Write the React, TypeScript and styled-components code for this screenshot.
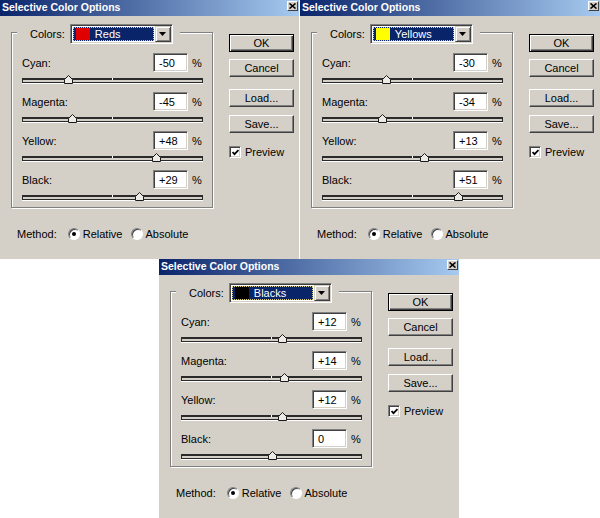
import React from "react";
import styled, { createGlobalStyle } from "styled-components";

const FACE = "#d4d0c8";
const SHADOW = "#808080";
const DARK = "#404040";

type Preset = { name: string; swatch: string; values: number[] };

const channels = ["Cyan", "Magenta", "Yellow", "Black"];

const reds: Preset = { name: "Reds", swatch: "#e00000", values: [-50, -45, 48, 29] };
const yellows: Preset = { name: "Yellows", swatch: "#ffff00", values: [-30, -34, 13, 51] };
const blacks: Preset = { name: "Blacks", swatch: "#000000", values: [12, 14, 12, 0] };

const fmt = (v: number) => (v > 0 ? `+${v}` : `${v}`);

const SelectiveColor = ({ preset, divider }: { preset: Preset; divider?: boolean }) => {
  return (
    <Window $divider={divider}>
      <TitleBar>
        <Title>Selective Color Options</Title>
        <CloseBox>
          <svg width="7" height="6" viewBox="0 0 7 6">
            <path d="M0.5 0.5 L6.5 5.5 M6.5 0.5 L0.5 5.5" stroke="#000" strokeWidth="1.6" />
          </svg>
        </CloseBox>
      </TitleBar>

      <Body>
        <LeftColumn>
          <GroupBox>
            <Legend>
              <span>Colors:</span>
              <Dropdown>
                <Selection>
                  <Swatch $colour={preset.swatch} />
                  <span>{preset.name}</span>
                </Selection>
                <ArrowButton>
                  <svg width="7" height="4" viewBox="0 0 7 4">
                    <path d="M0 0 H7 L3.5 4 Z" fill="#000" />
                  </svg>
                </ArrowButton>
              </Dropdown>
            </Legend>

            <Rows>
              {channels.map((ch, i) => (
                <Row key={ch}>
                  <RowHeader>
                    <Label>{ch}:</Label>
                    <Field>{fmt(preset.values[i])}</Field>
                    <Percent>%</Percent>
                  </RowHeader>
                  <SliderArea>
                    <Track>
                      <Thumb style={{ left: 90.5 + preset.values[i] * 0.9 - 5 }}>
                        <svg width="9" height="9" viewBox="0 0 9 9">
                          <polygon
                            points="4.5,0.5 8.5,4.5 8.5,8.5 0.5,8.5 0.5,4.5"
                            fill="#ecebe6"
                            stroke="#1a1a1a"
                          />
                        </svg>
                      </Thumb>
                    </Track>
                  </SliderArea>
                </Row>
              ))}
            </Rows>
          </GroupBox>

          <MethodRow>
            <MethodLabel>Method:</MethodLabel>
            <RadioOption>
              <Radio $checked />
              Relative
            </RadioOption>
            <RadioOption>
              <Radio />
              Absolute
            </RadioOption>
          </MethodRow>
        </LeftColumn>

        <RightColumn>
          <ButtonGroup $gap={7}>
            <Button $default>OK</Button>
            <Button>Cancel</Button>
          </ButtonGroup>
          <ButtonGroup $gap={8} $top={12}>
            <Button>Load...</Button>
            <Button>Save...</Button>
          </ButtonGroup>
          <CheckRow>
            <CheckBox>
              <svg width="7" height="7" viewBox="0 0 7 7">
                <polyline points="0.5,3 2.5,5.2 6.5,1" fill="none" stroke="#000" strokeWidth="1.8" />
              </svg>
            </CheckBox>
            Preview
          </CheckRow>
        </RightColumn>
      </Body>
    </Window>
  );
};

const App = () => {
  return (
    <>
      <GlobalStyle />
      <Page>
        <TopRow>
          <SelectiveColor preset={reds} divider />
          <SelectiveColor preset={yellows} />
        </TopRow>
        <BottomRow>
          <SelectiveColor preset={blacks} />
        </BottomRow>
      </Page>
    </>
  );
};

export default App;

const GlobalStyle = createGlobalStyle`
  html, body {
    margin: 0;
    padding: 0;
    background: #fff;
  }
  body {
    font-family: "Liberation Sans", Arial, sans-serif;
    font-size: 11px;
    color: #000;
  }
`;

const Page = styled.div`
  width: 600px;
  height: 518px;
  overflow: hidden;
  display: flex;
  flex-direction: column;
`;

const TopRow = styled.div`
  display: flex;
  height: 259px;
`;

const BottomRow = styled.div`
  display: flex;
  height: 259px;
  padding-left: 159px;
`;

const Window = styled.div<{ $divider?: boolean }>`
  box-sizing: border-box;
  width: 300px;
  height: 259px;
  background: ${FACE};
  display: flex;
  flex-direction: column;
  overflow: hidden;
  border-right: ${(p) => (p.$divider ? "1px solid #fff" : "none")};
`;

const TitleBar = styled.div`
  height: 16px;
  display: flex;
  justify-content: space-between;
  align-items: flex-start;
  padding: 0 1px 0 2px;
  background: linear-gradient(to right, #0a246a, #a6caf0);
`;

const Title = styled.div`
  color: #fff;
  font-weight: 700;
  font-size: 10.5px;
  line-height: 14px;
`;

const CloseBox = styled.div`
  box-sizing: border-box;
  width: 11px;
  height: 10px;
  margin-top: 1px;
  background: ${FACE};
  border: 1px solid;
  border-color: #fff ${DARK} ${DARK} #fff;
  display: flex;
  align-items: center;
  justify-content: center;
`;

const Body = styled.div`
  display: flex;
  gap: 16px;
  padding-left: 11px;
`;

const LeftColumn = styled.div`
  display: flex;
  flex-direction: column;
  margin-top: 16px;
`;

const GroupBox = styled.div`
  box-sizing: border-box;
  width: 202px;
  border: 1px solid ${SHADOW};
  box-shadow: 1px 1px 0 #fff, inset 1px 1px 0 #fff;
  display: flex;
  flex-direction: column;
  padding-bottom: 4px;
`;

const Legend = styled.div`
  align-self: flex-start;
  display: flex;
  align-items: center;
  gap: 5px;
  height: 20px;
  margin: -9px 0 0 5px;
  padding: 0 7px 0 13px;
  background: ${FACE};
`;

const Dropdown = styled.div`
  box-sizing: border-box;
  width: 103px;
  height: 20px;
  padding: 1px;
  display: flex;
  background: #fff;
  border: 1px solid;
  border-color: ${SHADOW} #fff #fff ${SHADOW};
  box-shadow: inset 1px 1px 0 ${DARK}, inset -1px -1px 0 ${FACE};
`;

const Selection = styled.div`
  flex: 1;
  margin: 1px;
  display: flex;
  align-items: center;
  gap: 5px;
  padding-left: 3px;
  background: #0a246a;
  color: #fff;
  outline: 1px dotted #d8cc80;
  outline-offset: -1px;
`;

const Swatch = styled.span<{ $colour: string }>`
  width: 14px;
  height: 12px;
  background: ${(p) => p.$colour};
`;

const ArrowButton = styled.div`
  box-sizing: border-box;
  width: 16px;
  height: 16px;
  display: flex;
  align-items: center;
  justify-content: center;
  background: ${FACE};
  border: 1px solid;
  border-color: ${FACE} ${DARK} ${DARK} ${FACE};
  box-shadow: inset 1px 1px 0 #fff, inset -1px -1px 0 ${SHADOW};
`;

const Rows = styled.div`
  display: flex;
  flex-direction: column;
  gap: 6px;
  margin-top: 9px;
  padding: 0 9px 0 10px;
`;

const Row = styled.div`
  display: flex;
  flex-direction: column;
`;

const RowHeader = styled.div`
  display: flex;
  align-items: center;
  height: 19px;
`;

const Label = styled.span`
  flex: 1;
`;

const Field = styled.div`
  box-sizing: border-box;
  width: 35px;
  height: 19px;
  padding-left: 5px;
  display: flex;
  align-items: center;
  background: #fff;
  border: 1px solid;
  border-color: ${SHADOW} #fff #fff ${SHADOW};
  box-shadow: inset 1px 1px 0 ${DARK}, inset -1px -1px 0 ${FACE};
`;

const Percent = styled.span`
  width: 11px;
  margin-left: 4px;
`;

const SliderArea = styled.div`
  box-sizing: border-box;
  height: 14px;
  padding-top: 6px;
`;

const Track = styled.div`
  position: relative;
  box-sizing: border-box;
  height: 5px;
  border: 1px solid #2a2a2a;
  border-top-width: 2px;
  background: ${FACE};
  box-shadow: 0 1px 0 #fff;

  &::after {
    content: "";
    position: absolute;
    left: 89px;
    top: -2px;
    width: 1px;
    height: 2px;
    background: #fff;
  }
`;

const Thumb = styled.div`
  position: absolute;
  top: -5px;
  width: 9px;
  height: 9px;
  z-index: 1;

  svg {
    display: block;
  }
`;

const MethodRow = styled.div`
  display: flex;
  align-items: center;
  height: 14px;
  margin-top: 19px;
  padding-left: 6px;
`;

const MethodLabel = styled.span`
  margin-right: 11px;
`;

const RadioOption = styled.label`
  display: inline-flex;
  align-items: center;
  gap: 3px;

  & + & {
    margin-left: 8px;
  }
`;

const Radio = styled.span<{ $checked?: boolean }>`
  position: relative;
  box-sizing: border-box;
  width: 12px;
  height: 12px;
  border-radius: 50%;
  background: #fff;
  border: 1px solid;
  border-color: ${SHADOW} #fff #fff ${SHADOW};
  box-shadow: inset 1px 1px 0 ${DARK};

  &::after {
    content: "";
    display: ${(p) => (p.$checked ? "block" : "none")};
    position: absolute;
    left: 3px;
    top: 3px;
    width: 4px;
    height: 4px;
    border-radius: 50%;
    background: #000;
  }
`;

const RightColumn = styled.div`
  display: flex;
  flex-direction: column;
  padding-top: 18px;
  width: 65px;
`;

const ButtonGroup = styled.div<{ $gap: number; $top?: number }>`
  display: flex;
  flex-direction: column;
  gap: ${(p) => p.$gap}px;
  margin-top: ${(p) => p.$top ?? 0}px;
`;

const Button = styled.div<{ $default?: boolean }>`
  box-sizing: border-box;
  width: 65px;
  height: 18px;
  display: flex;
  align-items: center;
  justify-content: center;
  background: ${FACE};
  border: 1px solid;
  border-color: ${(p) => (p.$default ? "#000" : `#fff ${DARK} ${DARK} #fff`)};
  box-shadow: ${(p) =>
    p.$default
      ? `inset 1px 1px 0 #fff, inset -1px -1px 0 ${DARK}, inset -2px -2px 0 ${SHADOW}`
      : `inset -1px -1px 0 ${SHADOW}`};
`;

const CheckRow = styled.label`
  display: flex;
  align-items: center;
  gap: 4px;
  margin-top: 13px;
  height: 12px;
`;

const CheckBox = styled.span`
  box-sizing: border-box;
  width: 12px;
  height: 12px;
  display: flex;
  align-items: center;
  justify-content: center;
  background: #fff;
  border: 1px solid;
  border-color: ${SHADOW} #fff #fff ${SHADOW};
  box-shadow: inset 1px 1px 0 ${DARK}, inset -1px -1px 0 ${FACE};
`;
